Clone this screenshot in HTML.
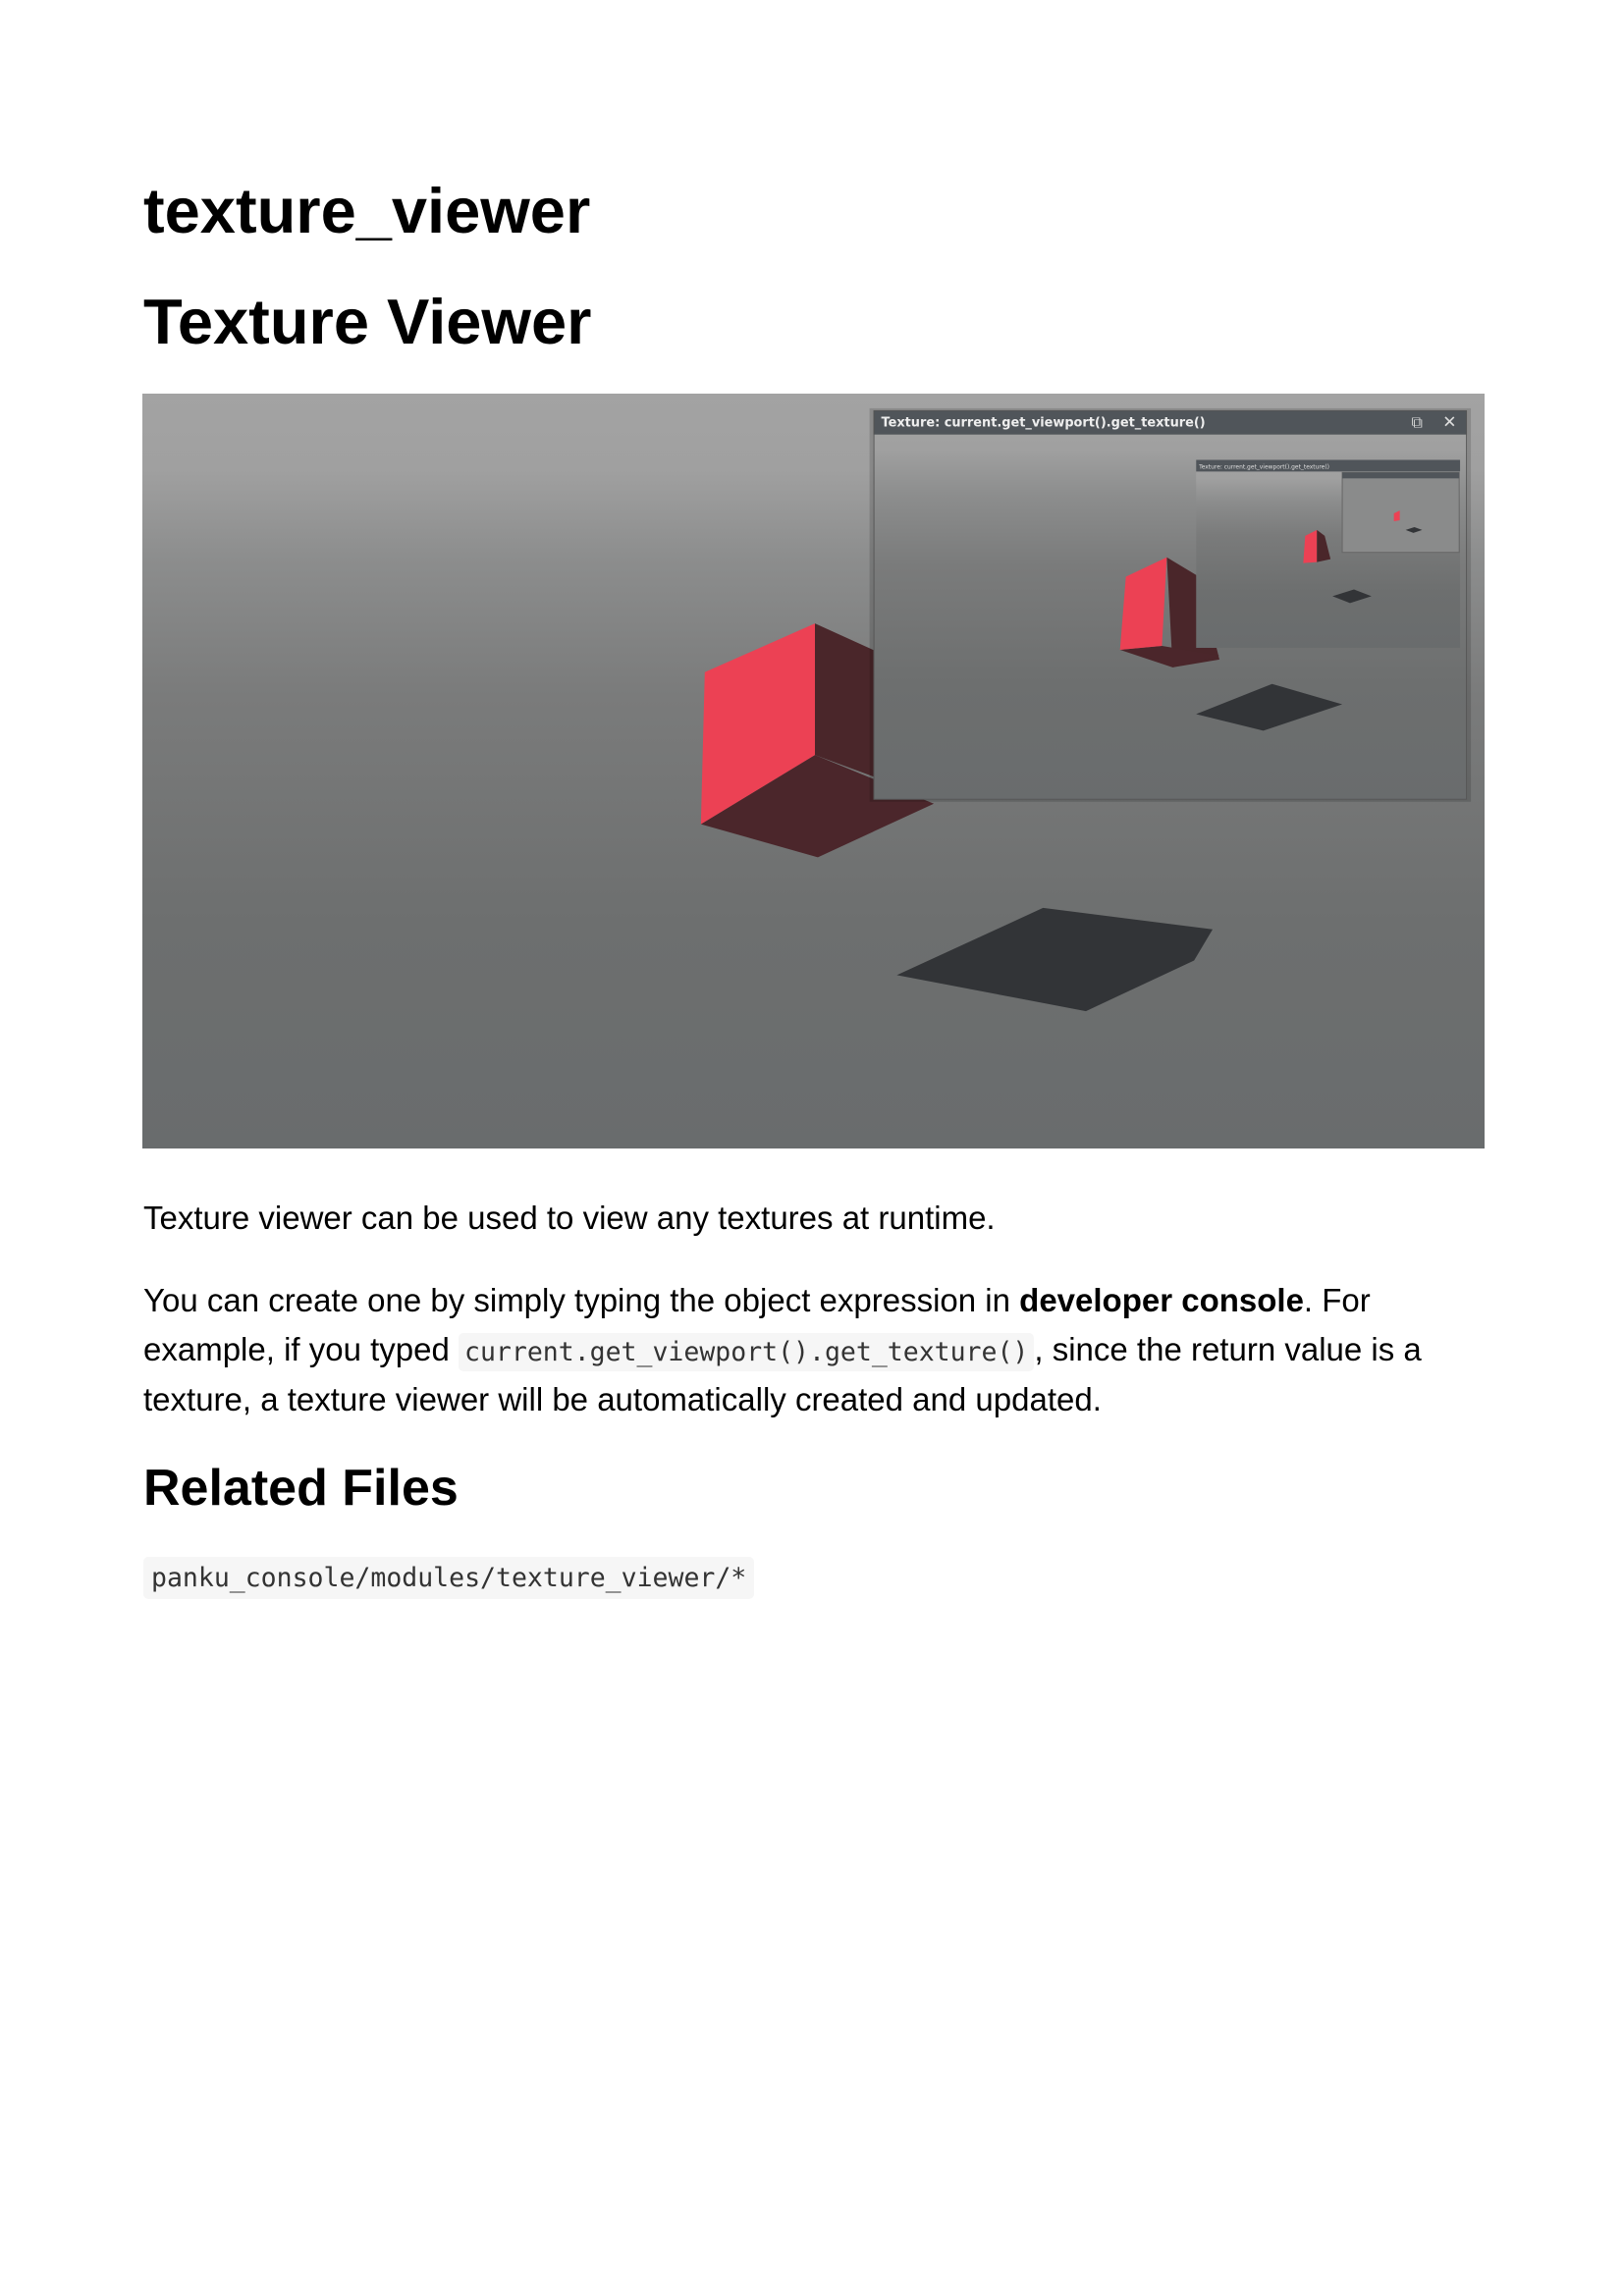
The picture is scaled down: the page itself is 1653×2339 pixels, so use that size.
<!DOCTYPE html>
<html><head><meta charset="utf-8"><style>
html,body{margin:0;padding:0;background:#fff;}
body{width:1653px;height:2339px;position:relative;font-family:"Liberation Sans",Arial,sans-serif;color:#000;}
.t{position:absolute;left:146px;margin:0;white-space:nowrap;}
h1,h2{font-weight:bold;}
p{font-size:33px;line-height:50.3px;}
code{font-family:"DejaVu Sans Mono","Liberation Mono",monospace;font-size:26.5px;line-height:1;background:#f6f6f6;border-radius:5px;padding:4px 6px;color:#333;}
</style></head><body>
<h1 class="t" style="top:175px;font-size:65px;line-height:80px;">texture_viewer</h1>
<h2 class="t" style="top:288px;font-size:65px;line-height:80px;">Texture Viewer</h2>
<svg style="position:absolute;left:145px;top:401px" width="1367" height="769" viewBox="0 0 1377 775" preserveAspectRatio="none">
<defs>
<linearGradient id="bg" x1="0" y1="0" x2="0" y2="1">
<stop offset="0" stop-color="#a3a3a3"/><stop offset="0.1" stop-color="#a0a0a0"/><stop offset="0.22" stop-color="#8c8d8d"/><stop offset="0.4" stop-color="#7a7b7b"/><stop offset="0.7" stop-color="#6d6f6f"/><stop offset="1" stop-color="#696c6d"/></linearGradient>
</defs>
<rect width="1377" height="775" fill="url(#bg)"/>
<polygon points="774,597 924,528 1098,550 1079,582 968,634" fill="#323437"/>
<polygon points="690,236 756,266 812,416 690,371" fill="#4a262a"/>
<polygon points="573,442 690,371 812,421 693,476" fill="#4b262b"/>
<polygon points="577,286 690,236 690,371 573,442" fill="#ec4154"/>
<rect x="746" y="15" width="617" height="404" fill="#000" opacity="0.15"/>
<svg x="750" y="17" width="609" height="400" viewBox="0 0 609 400">
<rect width="609" height="400" fill="url(#bg)"/>
<rect width="609" height="25" fill="#50555a"/>
<text x="8" y="17" font-family="DejaVu Sans,sans-serif" font-size="13" fill="#eee" font-weight="bold">Texture: current.get_viewport().get_texture()</text>
<text x="552" y="18" font-size="16" fill="#ddd">⧉</text><text x="584" y="18" font-size="17" fill="#ddd">✕</text>
<polygon points="331,312 409,281 481,302 400,329" fill="#323437"/>
<polygon points="301,151 334,171 355,256 307,264" fill="#4a262a"/>
<polygon points="253,246 296,242 355,252 307,264" fill="#4b262b"/>
<polygon points="259,171 301,151 296,242 253,246" fill="#ec4154"/>
<svg x="331" y="51" width="271" height="193" viewBox="0 0 271 193">
<rect width="271" height="193" fill="url(#bg)"/>
<rect width="271" height="12" fill="#50555a"/>
<text x="3" y="9" font-size="6" fill="#ddd" font-family="DejaVu Sans,sans-serif">Texture: current.get_viewport().get_texture()</text>
<polygon points="140,140 162,133 180,140 158,147" fill="#323437"/>
<polygon points="112,78 124,72 124,105 110,106" fill="#ec4154"/>
<polygon points="124,72 132,78 138,102 124,105" fill="#4a262a"/>
<rect x="150" y="13" width="120" height="82" fill="#8a8b8b" stroke="#666"/>
<rect x="150" y="13" width="120" height="6" fill="#50555a"/>
<polygon points="203,55 209,52 209,62 203,63" fill="#ec4154"/>
<polygon points="215,72 224,69 232,72 223,75" fill="#323437"/>
</svg>
<rect x="0.5" y="0.5" width="608" height="399" fill="none" stroke="#555"/>
</svg>
</svg>
<p class="t" style="top:1216px;">Texture viewer can be used to view any textures at runtime.</p>
<p class="t" style="top:1300px;">You can create one by simply typing the object expression in <b>developer console</b>. For<br>example, if you typed <code>current.get_viewport().get_texture()</code>, since the return value is a<br>texture, a texture viewer will be automatically created and updated.</p>
<h2 class="t" style="top:1481px;font-size:52px;line-height:70px;">Related Files</h2>
<div class="t" style="top:1595px;"><code style="padding:6px 8px;">panku_console/modules/texture_viewer/*</code></div>
</body></html>
